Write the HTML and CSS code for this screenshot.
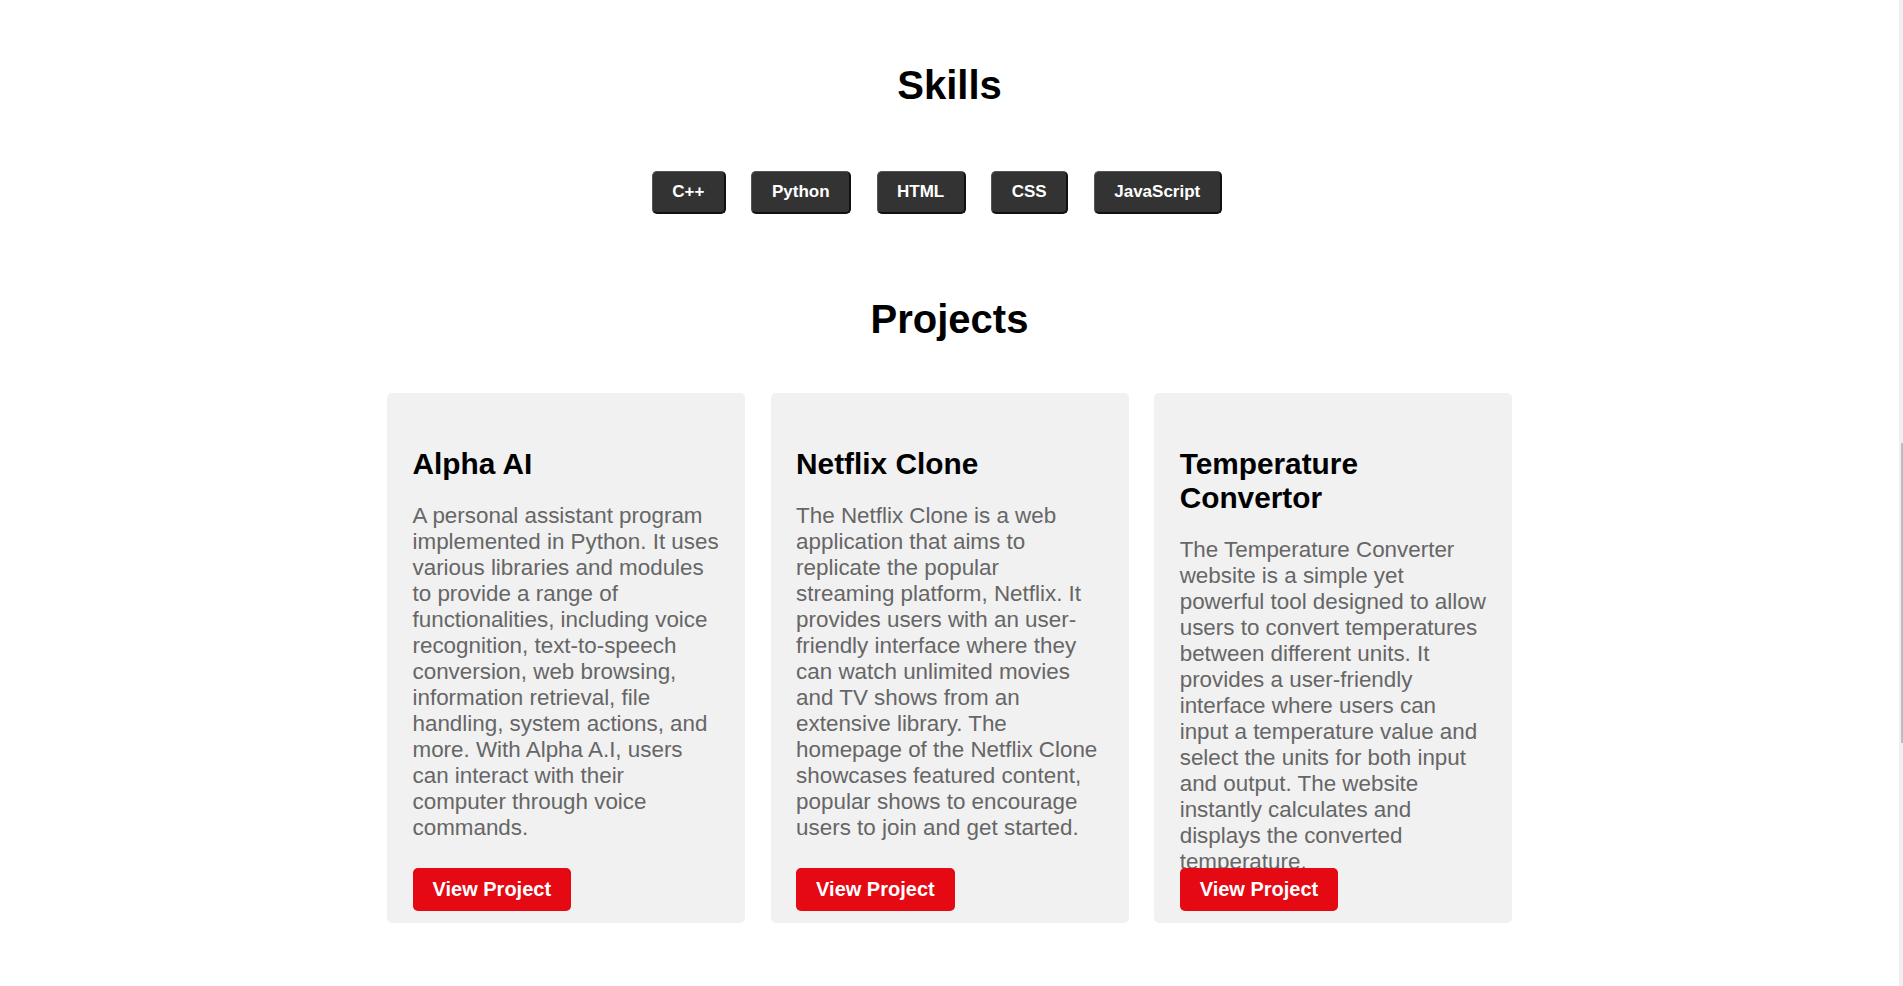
FILE: index.html
```html
<!DOCTYPE html>
<html lang="en">
<head>
<meta charset="utf-8">
<title>Portfolio</title>
<link rel="stylesheet" href="styles.css">
</head>
<body>
<main class="page">
  <section class="skills">
    <h2 class="section-title">Skills</h2>
    <div class="skill-list">
      <button class="skill">C++</button>
      <button class="skill">Python</button>
      <button class="skill">HTML</button>
      <button class="skill">CSS</button>
      <button class="skill">JavaScript</button>
    </div>
  </section>
  <section class="projects">
    <h2 class="section-title">Projects</h2>
    <div class="project-grid">
      <article class="card">
        <h3 class="card-title">Alpha AI</h3>
        <p class="card-text">A personal assistant program implemented in Python. It uses various libraries and modules to provide a range of functionalities, including voice recognition, text-to-speech conversion, web browsing, information retrieval, file handling, system actions, and more. With Alpha A.I, users can interact with their computer through voice commands.</p>
        <a class="card-btn" href="#">View Project</a>
      </article>
      <article class="card">
        <h3 class="card-title">Netflix Clone</h3>
        <p class="card-text">The Netflix Clone is a web application that aims to replicate the popular streaming platform, Netflix. It provides users with an user-friendly interface where they can watch unlimited movies and TV shows from an extensive library. The homepage of the Netflix Clone showcases featured content, popular shows to encourage users to join and get started.</p>
        <a class="card-btn" href="#">View Project</a>
      </article>
      <article class="card">
        <h3 class="card-title">Temperature Convertor</h3>
        <p class="card-text">The Temperature Converter website is a simple yet powerful tool designed to allow users to convert temperatures between different units. It provides a user-friendly interface where users can input a temperature value and select the units for both input and output. The website instantly calculates and displays the converted temperature.</p>
        <a class="card-btn" href="#">View Project</a>
      </article>
    </div>
  </section>
</main>
<div class="scrollbar"><div class="scrollbar-thumb"></div></div>
</body>
</html>
```

FILE: styles.css
```css
html, body {
  margin: 0;
  padding: 0;
  background: #ffffff;
}

body {
  font-family: "Liberation Sans", Arial, sans-serif;
  color: #000;
}

.page {
  margin-right: 4px;
  padding-top: 63px;
}

.section-title {
  margin: 0;
  font-size: 40px;
  font-weight: bold;
  text-align: center;
  color: #000;
}

.skills .section-title {
  margin-bottom: 63px;
}

.skill-list {
  display: flex;
  justify-content: center;
}

.skill {
  margin-right: 25.5px;
  font-family: "Liberation Sans", Arial, sans-serif;
  font-size: 17px;
  font-weight: bold;
  color: #fff;
  background: #333333;
  padding: 10px 19.5px;
  border-style: solid;
  border-width: 1px 2px 2px 1px;
  border-color: #555 #111 #111 #555;
  border-radius: 5px;
  line-height: normal;
}

.projects {
  margin-top: 83px;
}

.projects .section-title {
  margin-bottom: 50.7px;
}

.project-grid {
  display: grid;
  grid-template-columns: repeat(3, 358px);
  justify-content: center;
  column-gap: 25.6px;
  padding-bottom: 40px;
}

.card {
  box-sizing: border-box;
  height: 530.6px;
  background: #f1f1f1;
  border-radius: 5px;
  padding: 25.6px 25.6px 12.6px;
  display: flex;
  flex-direction: column;
  align-items: flex-start;
}

.card-title {
  margin: 29.2px 0 0;
  font-size: 29.8px;
  font-weight: bold;
  color: #000;
}

.card-text {
  margin: 21.4px 0 0;
  font-size: 22.4px;
  color: #666;
  min-height: 0;
  flex: 0 1 auto;
}

.card-btn {
  margin-top: auto;
  flex: none;
  display: inline-block;
  background: #e50914;
  color: #fff;
  font-size: 20px;
  font-weight: bold;
  text-decoration: none;
  padding: 10px 20px;
  border-radius: 5px;
}

.scrollbar {
  position: fixed;
  top: 0;
  right: 0;
  width: 4px;
  height: 100vh;
  background: #efefef;
}

.scrollbar-thumb {
  margin-top: 443px;
  margin-left: 2px;
  width: 2px;
  height: 300px;
  background: #bdbdbd;
}
```
